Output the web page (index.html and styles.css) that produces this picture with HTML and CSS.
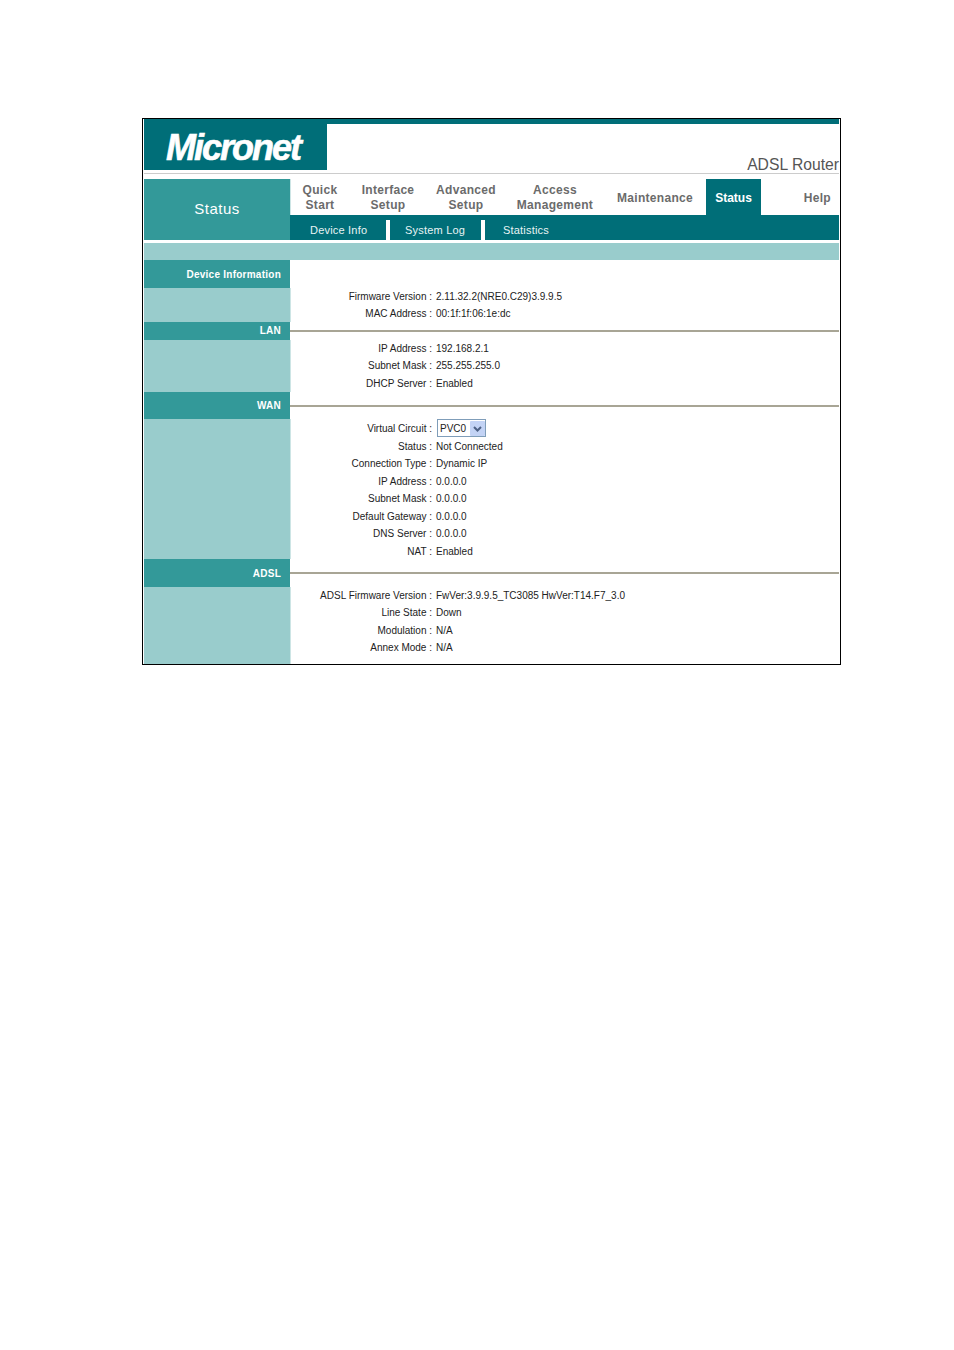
FILE: index.html
```html
<!DOCTYPE html>
<html lang="en">
<head>
    <meta charset="UTF-8">
    <meta name="viewport" content="width=device-width, initial-scale=1.0">
    <title>ADSL Router - Status</title>
    <link rel="stylesheet" href="styles.css">
</head>
<body>
    <div class="frame">
        <div class="header">
            <div class="logo">Micronet</div>
            <div class="model">ADSL Router</div>
        </div>
        <div class="menu">
            <div class="menu-title">Status</div>
            <div class="menu-right">
                <div class="tabs">
                    <div class="tab">Quick<br>Start</div>
                    <div class="tab">Interface<br>Setup</div>
                    <div class="tab">Advanced<br>Setup</div>
                    <div class="tab">Access<br>Management</div>
                    <div class="tab">Maintenance</div>
                    <div class="tab active">Status</div>
                    <div class="tab help">Help</div>
                </div>
                <div class="subtabs">
                    <div class="subtab first">Device Info</div>
                    <div class="subtab second">System Log</div>
                    <div class="subtab third">Statistics</div>
                </div>
            </div>
        </div>
        <div class="band"></div>

        <div class="section device">
            <div class="head h28">Device Information</div>
            <div class="rule"></div>
            <div class="fill"></div>
            <div class="rows">
                <div class="row"><span class="label">Firmware Version :</span><span>2.11.32.2(NRE0.C29)3.9.9.5</span></div>
                <div class="row"><span class="label">MAC Address :</span><span>00:1f:1f:06:1e:dc</span></div>
            </div>
        </div>

        <div class="section lan">
            <div class="head h18">LAN</div>
            <div class="rule line"></div>
            <div class="fill"></div>
            <div class="rows">
                <div class="row"><span class="label">IP Address :</span><span>192.168.2.1</span></div>
                <div class="row"><span class="label">Subnet Mask :</span><span>255.255.255.0</span></div>
                <div class="row"><span class="label">DHCP Server :</span><span>Enabled</span></div>
            </div>
        </div>

        <div class="section wan">
            <div class="head h27">WAN</div>
            <div class="rule line"></div>
            <div class="fill"></div>
            <div class="rows">
                <div class="row">
                    <span class="label">Virtual Circuit :</span>
                    <span class="picker">
                        <select class="picker-box"><option>PVC0</option></select>
                        <svg class="picker-arrow" viewBox="0 0 15 15" width="15" height="15">
                            <rect width="15" height="15" rx="1" fill="#c3d3f5"/>
                            <path d="M4 6l3.5 3.5L11 6" fill="none" stroke="#4d6185" stroke-width="2"/>
                        </svg>
                    </span>
                </div>
                <div class="row"><span class="label">Status :</span><span>Not Connected</span></div>
                <div class="row"><span class="label">Connection Type :</span><span>Dynamic IP</span></div>
                <div class="row"><span class="label">IP Address :</span><span>0.0.0.0</span></div>
                <div class="row"><span class="label">Subnet Mask :</span><span>0.0.0.0</span></div>
                <div class="row"><span class="label">Default Gateway :</span><span>0.0.0.0</span></div>
                <div class="row"><span class="label">DNS Server :</span><span>0.0.0.0</span></div>
                <div class="row"><span class="label">NAT :</span><span>Enabled</span></div>
            </div>
        </div>

        <div class="section adsl">
            <div class="head h28">ADSL</div>
            <div class="rule line"></div>
            <div class="fill"></div>
            <div class="rows">
                <div class="row"><span class="label">ADSL Firmware Version :</span><span>FwVer:3.9.9.5_TC3085 HwVer:T14.F7_3.0</span></div>
                <div class="row"><span class="label">Line State :</span><span>Down</span></div>
                <div class="row"><span class="label">Modulation :</span><span>N/A</span></div>
                <div class="row"><span class="label">Annex Mode :</span><span>N/A</span></div>
            </div>
        </div>
    </div>
</body>
</html>
```

FILE: styles.css
```css
body {
    margin: 0;
    padding: 118px 0 0 142px;
    background-color: #fff;
    font-family: "Liberation Sans", Arial, sans-serif;
    font-size: 10px;
    color: #222;
}
.frame {
    width: 695px;
    height: 545px;
    border: 1px solid #000;
    padding: 0 1px;
    overflow: hidden;
}
.header {
    display: flex;
    justify-content: space-between;
    align-items: flex-end;
    height: 49px;
    border-top: 5px solid #006e78;
    border-bottom: 1px solid #ccc;
}
.logo {
    width: 183px;
    height: 46px;
    align-self: flex-start;
    background-color: #006e78;
    color: #fff;
    font-size: 36px;
    font-weight: bold;
    font-style: italic;
    letter-spacing: -2px;
    -webkit-text-stroke: 0.6px #fff;
    line-height: 48px;
    padding-left: 22px;
    box-sizing: border-box;
}
.model {
    font-size: 15.7px;
    color: #555;
    line-height: 18px;
    margin-bottom: -1px;
}
.menu {
    display: flex;
    margin-top: 5px;
    height: 61px;
}
.menu-title {
    width: 146px;
    background-color: #339999;
    box-shadow: 1px 0 0 #cde5e5;
    color: #fff;
    font-size: 15px;
    letter-spacing: 0.5px;
    text-align: center;
    line-height: 60px;
}
.menu-right {
    flex: 1;
    display: flex;
    flex-direction: column;
}
.tabs {
    display: grid;
    grid-template-columns: 60px 76px 80px 98px 102px 55px 1fr;
    height: 36px;
}
.tab {
    display: flex;
    align-items: center;
    justify-content: center;
    padding-top: 2px;
    box-sizing: border-box;
    text-align: center;
    font-size: 12px;
    font-weight: bold;
    letter-spacing: 0.3px;
    line-height: 15px;
    color: #6b6b6b;
}
.tab.active {
    background-color: #006e78;
    color: #fff;
    letter-spacing: 0;
}
.tab.help {
    justify-content: flex-end;
    padding-right: 8px;
}
.subtabs {
    display: flex;
    height: 25px;
    background-color: #006e78;
    color: #e8f4f4;
    font-size: 11px;
    letter-spacing: 0.2px;
}
.subtab {
    height: 20px;
    margin-top: 5px;
    line-height: 20px;
    box-sizing: border-box;
}
.subtab.first {
    width: 96px;
    padding-left: 20px;
}
.subtab.second {
    width: 99px;
    padding-left: 15px;
    border-left: 4px solid #fff;
    border-right: 4px solid #fff;
}
.subtab.third {
    padding-left: 18px;
}
.band {
    height: 17px;
    margin-top: 3px;
    background-color: #99cccc;
}
.section {
    display: grid;
    grid-template-columns: 146px 1fr;
    grid-template-rows: auto 1fr;
}
.device { height: 62px; }
.lan { height: 70px; }
.wan { height: 167px; }
.adsl { height: 105px; }
.head {
    background-color: #339999;
    color: #fff;
    font-weight: bold;
    letter-spacing: 0.25px;
    padding-right: 9px;
    display: flex;
    align-items: center;
    justify-content: flex-end;
}
.h18 {
    height: 17px;
    padding-bottom: 1px;
}
.h27 { height: 27px; }
.h28 { height: 28px; }
.rule {
    display: flex;
    align-items: center;
}
.rule.line::before {
    content: "";
    flex: 1;
    height: 2px;
    background-color: #a8a595;
}
.fill {
    background-color: #99cccc;
    box-shadow: 1px 0 0 #cde5e5;
}
.rows {
    min-height: 0;
    margin-top: -0.5px;
}
.wan .rows {
    margin-top: 1px;
}
.row {
    display: grid;
    grid-template-columns: 142px 1fr;
    column-gap: 4px;
    height: 17.5px;
    line-height: 17.5px;
    white-space: nowrap;
}
.label {
    text-align: right;
}
.picker {
    position: relative;
    display: block;
    width: 50px;
    height: 18px;
    margin-top: -1px;
}
.picker-box {
    appearance: none;
    display: block;
    width: 49px;
    height: 18px;
    margin: 0 0 0 1px;
    padding: 0 0 0 2px;
    border: 1px solid #7f9db9;
    border-radius: 0;
    background-color: #fff;
    font-family: "Liberation Sans", Arial, sans-serif;
    font-size: 10px;
    color: #222;
}
.picker-arrow {
    position: absolute;
    top: 1.5px;
    left: 34px;
}
```
